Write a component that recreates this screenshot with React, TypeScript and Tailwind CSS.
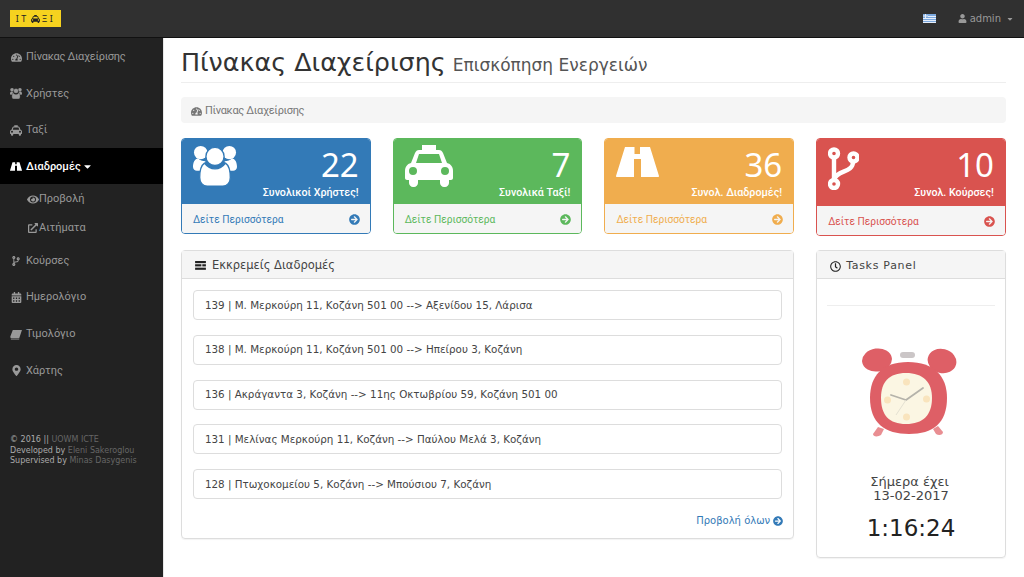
import React from "react";
import { FaTachometerAlt, FaCodeBranch, FaCalendarAlt, FaMapMarkerAlt, FaEye, FaExternalLinkAlt, FaUser, FaArrowCircleRight, FaCaretDown, FaRegClock } from "react-icons/fa";

function UsersIcon({ className, gap }: { className?: string; gap: string }) {
  return (
    <svg viewBox="0 0 46 42" className={className} fill="currentColor">
      <circle cx="8" cy="7" r="7" />
      <circle cx="38" cy="7" r="7" />
      <path d="M0 22c0-5 2-8 5-9 2 2 5 3 8 3l-3 10H4c-2 0-4-2-4-4zM46 22c0-5-2-8-5-9-2 2-5 3-8 3l3 10h6c2 0 4-2 4-4z" />
      <circle cx="23" cy="11" r="9.5" stroke={gap} strokeWidth="1.4" />
      <path d="M12 18c3 4 7 6 11 6s8-2 11-6c3 2 5 7 5 15 0 5-3 9-8 9H15c-5 0-8-4-8-9 0-8 2-13 5-15z" stroke={gap} strokeWidth="1.4" />
    </svg>
  );
}

function TaxiIcon({ className }: { className?: string }) {
  return (
    <svg viewBox="0 0 48 42" className={className} fill="currentColor">
      <path fillRule="evenodd" d="M17 0h14v5h3c2 0 3 1 4 3l4 10c4 1 6 4 6 8v7c0 1-1 2-2 2h-2v3c0 2-2 4-4 4h-1c-2 0-4-2-4-4v-3H13v3c0 2-2 4-4 4H8c-2 0-4-2-4-4v-3H2c-1 0-2-1-2-2v-7c0-4 2-7 6-8l4-10c1-2 2-3 4-3h3V0zM14 9l-3 9h26l-3-9H14zM8 22a4 4 0 1 0 0 8 4 4 0 0 0 0-8zm32 0a4 4 0 1 0 0 8 4 4 0 0 0 0-8z" />
    </svg>
  );
}

function RoadIcon({ className }: { className?: string }) {
  return (
    <svg viewBox="0 0 43 30" className={className} fill="currentColor">
      <path fillRule="evenodd" d="M9 0h9.5v7H24V0H34l9 29c0 .6-.4 1-1 1H25V12h-7v18H1c-.6 0-1-.4-1-1L9 0z" />
    </svg>
  );
}

function BranchIcon({ className }: { className?: string }) {
  return (
    <svg viewBox="0 0 31 43" className={className} fill="none" stroke="currentColor" strokeWidth="4.4">
      <circle cx="6" cy="6.5" r="4" />
      <circle cx="6" cy="37" r="4" />
      <circle cx="25.5" cy="10.5" r="4" />
      <path d="M6 10.500v22.500M25 15c0 11-17 8-19 18" />
    </svg>
  );
}

function BookIcon({ className }: { className?: string }) {
  return (
    <svg viewBox="0 0 13 12" className={className} fill="currentColor">
      <path d="M3 1h10L10 10H1.500C.5 10 0 9 .4 8L3 1z" />
      <path d="M.6 10.500h9.600l-.3 1H2c-.8 0-1.200-.5-1.400-1z" />
    </svg>
  );
}

function BarsIcon({ className }: { className?: string }) {
  return (
    <svg viewBox="0 0 12 10" className={className} fill="currentColor">
      <rect x="0" y="0" width="12" height="2.4" />
      <rect x="0" y="3.6" width="7" height="2.4" />
      <rect x="8" y="3.6" width="4" height="2.4" />
      <rect x="0" y="7.400" width="12" height="2.4" />
    </svg>
  );
}

function AlarmClock() {
  return (
    <svg viewBox="0 0 95 91" className="w-[95px] h-[91px]">
      <ellipse cx="15" cy="13" rx="15" ry="11.500" fill="#de5f66" transform="rotate(-8 15 13)" />
      <ellipse cx="80" cy="14" rx="14.500" ry="12" fill="#de5f66" transform="rotate(14 80 14)" />
      <rect x="38" y="5" width="15" height="6" rx="3" fill="#cbc6c7" />
      <path d="M11 87l5-7 6 2-3 6c-3 2-8 2-8-1z" fill="#e98e92" />
      <path d="M81 85l-5-6-5 3 3 5c3 2 7 1 7-2z" fill="#e98e92" />
      <path d="M46 15c26 0 39 14 39 36 0 25-14 36-38 36S8 76 8 51c0-22 12-36 38-36z" fill="#de5f66" />
      <path d="M44 26c17 0 26 9 26 25 0 17-9 26-26 26S19 68 19 51c0-16 8-25 25-25z" fill="#fbf6e3" />
      <circle cx="44.500" cy="35" r="3.500" fill="#f9e4bd" />
      <circle cx="44.500" cy="70" r="3.500" fill="#f9e4bd" />
      <circle cx="25.500" cy="53" r="3.500" fill="#f9e4bd" />
      <circle cx="64.500" cy="52" r="3.500" fill="#f9e4bd" />
      <path d="M44 53L29 48M44 53L61 41" stroke="#b5b3aa" strokeWidth="1.800" strokeLinecap="round" />
      <path d="M44 53L34 68" stroke="#e4e1d2" strokeWidth="1" />
    </svg>
  );
}

const routes = [
  "139 | Μ. Μερκούρη 11, Κοζάνη 501 00 --> Αξενίδου 15, Λάρισα",
  "138 | Μ. Μερκούρη 11, Κοζάνη 501 00 --> Ηπείρου 3, Κοζάνη",
  "136 | Ακράγαντα 3, Κοζάνη --> 11ης Οκτωβρίου 59, Κοζάνη 501 00",
  "131 | Μελίνας Μερκούρη 11, Κοζάνη --> Παύλου Μελά 3, Κοζάνη",
  "128 | Πτωχοκομείου 5, Κοζάνη --> Μπούσιου 7, Κοζάνη",
];

function NavItem({ icon, label, tight }: { icon: React.ReactNode; label: string; tight?: boolean }) {
  return (
    <div className="h-[36.6px] pt-[2px] flex items-center pl-[10px] gap-[4px] text-[#999]">
      <span className="w-[12px] flex justify-center text-[11px]">{icon}</span>
      <span className={tight ? "tracking-[-0.3px]" : ""}>{label}</span>
    </div>
  );
}

function StatCard(p: { color: string; border: string; text: string; icon: React.ReactNode; n: string; label: string; tall?: boolean }) {
  return (
    <div className={`rounded-[4px] border overflow-hidden ${p.border} ${p.tall ? "h-[98px]" : "h-[96px]"}`}>
      <div className={`${p.color} ${p.tall ? "h-[67px]" : "h-[65px]"} text-white flex justify-between pl-[11px] pr-[11px] pt-[6px]`}>
        <div>{p.icon}</div>
        <div className="text-right font-['Roboto',sans-serif]">
          <div className="text-[33px] leading-[40px] font-['Noto_Sans',sans-serif]">{p.n}</div>
          <div className="text-[10.7px] leading-[14px] mt-[1px] font-medium whitespace-nowrap">{p.label}</div>
        </div>
      </div>
      <div className={`bg-[#f5f5f5] h-[29px] pt-[2px] flex items-center justify-between pl-[11px] pr-[10px] text-[10.2px] font-['Roboto',sans-serif] ${p.text}`}>
        <span>Δείτε Περισσότερα</span>
        <FaArrowCircleRight className="text-[11px]" />
      </div>
    </div>
  );
}

export default function App() {
  return (
    <div className="w-[1024px] h-[577px] overflow-hidden flex flex-col bg-white font-['DejaVu_Sans',sans-serif] text-[#333]">
      <header className="h-[38px] shrink-0 bg-[#303030] border-b border-[#111] flex items-center justify-between pl-[10px] pr-[10px]">
        <div className="w-[51px] h-[17px] bg-[#f6d21f] text-[#222] text-[9px] tracking-[2.5px] flex items-center justify-center gap-[2px] font-['Noto_Sans',sans-serif]">
          <span>ΙΤ</span>
          <TaxiIcon className="w-[9px] h-[8px]" />
          <span>ΞΙ</span>
        </div>
        <div className="flex items-center text-[#999] font-['DejaVu_Sans',sans-serif]">
          <svg viewBox="0 0 13 9" className="w-[13px] h-[9px] mr-[22px]">
            <rect width="13" height="9" fill="#7ba8de" />
            <path d="M0 2.500h13M0 4.500h13M0 6.500h13M0 8.500h13" stroke="#e6eefa" strokeWidth="1" />
            <rect width="5" height="4" fill="#7ba8de" />
            <path d="M2.500 0v4M0 2h5" stroke="#e6eefa" strokeWidth="1" />
          </svg>
          <FaUser className="text-[9px] mr-[3px]" />
          <span className="text-[10px]">admin</span>
          <FaCaretDown className="text-[8px] ml-[5px]" />
        </div>
      </header>
      <div className="flex-1 flex min-h-0">
        <aside className="w-[164px] shrink-0 bg-[#222] border-r border-[#e7e7e7] flex flex-col text-[11px] font-['Roboto',sans-serif]">
          <div>
            <NavItem tight icon={<FaTachometerAlt />} label="Πίνακας Διαχείρισης" />
            <NavItem icon={<UsersIcon className="w-[12px] h-[11px]" gap="#222" />} label="Χρήστες" />
            <NavItem icon={<TaxiIcon className="w-[12px] h-[11px]" />} label="Ταξί" />
          </div>
          <div className="h-[36px] shrink-0 pt-[2px] bg-black text-white flex items-center pl-[10px] gap-[4px] font-medium">
            <span className="w-[12px] flex justify-center"><RoadIcon className="w-[12px] h-[9px]" /></span>
            <span>Διαδρομές</span>
            <FaCaretDown className="text-[11px] -ml-[3px]" />
          </div>
          <div className="h-[29px] pt-[2px] flex items-center pl-[27px] text-[#999]"><FaEye className="text-[11px] w-[12px]" /><span>Προβολή</span></div>
          <div className="h-[28px] pt-[2px] flex items-center pl-[27px] text-[#999]"><FaExternalLinkAlt className="text-[10px] w-[12px]" /><span>Αιτήματα</span></div>
          <div className="mt-[1px]">
            <NavItem icon={<FaCodeBranch className="text-[10px]" />} label="Κούρσες" />
            <NavItem icon={<FaCalendarAlt />} label="Ημερολόγιο" />
            <NavItem icon={<BookIcon className="w-[12px] h-[11px]" />} label="Τιμολόγιο" />
            <NavItem icon={<FaMapMarkerAlt />} label="Χάρτης" />
          </div>
          <div className="mt-[47px] pl-[10px] text-[8px] leading-[10.5px] font-['DejaVu_Sans',sans-serif] text-[#aaa]">
            <div>© 2016 || <span className="text-[#666]">UOWM ICTE</span></div>
            <div>Developed by <span className="text-[#666]">Eleni Sakeroglou</span></div>
            <div>Supervised by <span className="text-[#666]">Minas Dasygenis</span></div>
          </div>
        </aside>
        <main className="flex-1 min-w-0 pl-[16.9px] pr-[18.1px]">
          <div className="h-[45px] border-b border-[#eee] flex items-end pb-[2px]">
            <h1 className="text-[25.4px] leading-[36px] font-normal">Πίνακας Διαχείρισης</h1>
            <span className="text-[17px] leading-[24px] mb-[3px] text-[#555] ml-[7px]">Επισκόπηση Ενεργειών</span>
          </div>
          <div className="mt-[14px] h-[26px] pt-[2px] bg-[#f5f5f5] rounded-[4px] flex items-center pl-[10px] text-[11px] tracking-[-0.3px] text-[#777] font-['Roboto',sans-serif] gap-[3px]">
            <FaTachometerAlt className="text-[11px]" />
            <span>Πίνακας Διαχείρισης</span>
          </div>
          <div className="mt-[15px] grid grid-cols-4 gap-[22px] items-start h-[98px]">
            <StatCard color="bg-[#337ab7]" border="border-[#337ab7]" text="text-[#337ab7]" icon={<UsersIcon className="w-[44px] h-[42px]" gap="#337ab7" />} n="22" label="Συνολικοί Χρήστες!" />
            <StatCard color="bg-[#5cb85c]" border="border-[#5cb85c]" text="text-[#5cb85c]" icon={<TaxiIcon className="w-[48px] h-[42px]" />} n="7" label="Συνολικά Ταξί!" />
            <StatCard color="bg-[#f0ad4e]" border="border-[#f0ad4e]" text="text-[#f0ad4e]" icon={<RoadIcon className="w-[43px] h-[30px] mt-[2px]" />} n="36" label="Συνολ. Διαδρομές!" />
            <StatCard tall color="bg-[#d9534f]" border="border-[#d9534f]" text="text-[#d9534f]" icon={<BranchIcon className="w-[31px] h-[43px] mt-[2px]" />} n="10" label="Συνολ. Κούρσες!" />
          </div>
          <div className="mt-[14px] grid grid-cols-4 gap-[22px] items-start">
            <section className="col-span-3 h-[289px] border border-[#ddd] rounded-[4px] shadow-[0_1px_1px_rgba(0,0,0,0.05)]">
              <div className="h-[28px] pt-[2px] bg-[#f5f5f5] border-b border-[#ddd] flex items-center pl-[13px] text-[11.5px] text-[#444] gap-[6px]">
                <BarsIcon className="w-[11px] h-[9px] text-[#222]" />
                <span>Εκκρεμείς Διαδρομές</span>
              </div>
              <div className="px-[11px] pt-[11px] flex flex-col gap-[14.75px]">
                {routes.map((r) => (
                  <div key={r} className="h-[30px] pt-[1px] border border-[#ddd] rounded-[4px] flex items-center pl-[11px] text-[10.35px] text-[#444]">{r}</div>
                ))}
              </div>
              <div className="mt-[14px] pr-[10px] flex justify-end items-center gap-[3px] text-[10px] text-[#337ab7]">
                <span>Προβολή όλων</span>
                <FaArrowCircleRight className="text-[10px]" />
              </div>
            </section>
            <section className="h-[308px] border border-[#ddd] rounded-[4px] shadow-[0_1px_1px_rgba(0,0,0,0.05)] flex flex-col">
              <div className="h-[28px] shrink-0 pt-[3px] bg-[#f5f5f5] border-b border-[#ddd] flex items-center pl-[13px] text-[11px] text-[#444] tracking-[0.7px] gap-[5px]">
                <FaRegClock className="text-[11px] text-[#222]" />
                <span>Tasks Panel</span>
              </div>
              <div className="mx-[10px] mt-[26px] border-t border-[#eee]" />
              <div className="flex justify-center mt-[41px] pr-[3px]"><AlarmClock /></div>
              <div className="mt-[37px] text-center text-[13px] leading-[14px] text-[#444]">
                <div className="pr-[3px]">Σήμερα έχει</div>
                <div>13-02-2017</div>
              </div>
              <div className="mt-[12px] text-center text-[23px] leading-[26px] text-[#222]">1:16:24</div>
            </section>
          </div>
        </main>
      </div>
    </div>
  );
}
